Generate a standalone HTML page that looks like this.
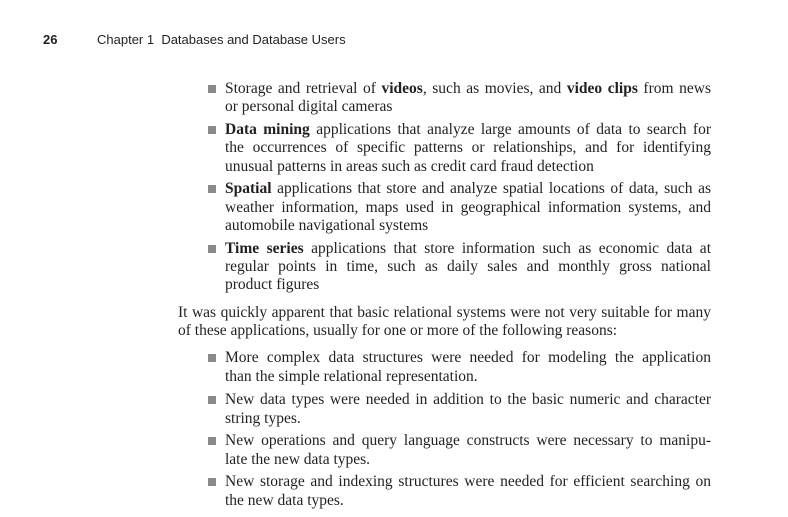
<!DOCTYPE html>
<html><head><meta charset="utf-8"><style>
body{margin:0;width:788px;height:517px;background:#fff;position:relative;overflow:hidden;color:#231f20}
.h{position:absolute;top:32px;font-family:"Liberation Sans",sans-serif;font-size:13px}
.l{position:absolute;font-family:"Liberation Serif",serif;font-size:15.5px;line-height:18px;white-space:nowrap}
.j{text-align:justify;text-align-last:justify;white-space:normal}
.b{position:absolute;width:8px;height:8px;background:#8a8a8a}
</style></head><body>
<div class="h" style="left:43px;font-weight:bold">26</div>
<div class="h" style="left:97px">Chapter 1&nbsp; Databases and Database Users</div>

<div class="b" style="left:208px;top:85px"></div>
<div class="l j" style="left:225px;top:80px;width:486px">Storage and retrieval of <b>videos</b>, such as movies, and <b>video clips</b> from news</div>
<div class="l" style="left:225px;top:98px">or personal digital cameras</div>

<div class="b" style="left:208px;top:126px"></div>
<div class="l j" style="left:225px;top:121px;width:486px"><b>Data mining</b> applications that analyze large amounts of data to search for</div>
<div class="l j" style="left:225px;top:139px;width:486px">the occurrences of specific patterns or relationships, and for identifying</div>
<div class="l" style="left:225px;top:158px">unusual patterns in areas such as credit card fraud detection</div>

<div class="b" style="left:208px;top:185px"></div>
<div class="l j" style="left:225px;top:180px;width:486px"><b>Spatial</b> applications that store and analyze spatial locations of data, such as</div>
<div class="l j" style="left:225px;top:199px;width:486px">weather information, maps used in geographical information systems, and</div>
<div class="l" style="left:225px;top:217px">automobile navigational systems</div>

<div class="b" style="left:208px;top:245px"></div>
<div class="l j" style="left:225px;top:240px;width:486px"><b>Time series</b> applications that store information such as economic data at</div>
<div class="l j" style="left:225px;top:258px;width:486px">regular points in time, such as daily sales and monthly gross national</div>
<div class="l" style="left:225px;top:276px">product figures</div>

<div class="l j" style="left:178px;top:304px;width:533px">It was quickly apparent that basic relational systems were not very suitable for many</div>
<div class="l" style="left:178px;top:322px">of these applications, usually for one or more of the following reasons:</div>

<div class="b" style="left:208px;top:354px"></div>
<div class="l j" style="left:225px;top:349px;width:486px">More complex data structures were needed for modeling the application</div>
<div class="l" style="left:225px;top:368px">than the simple relational representation.</div>

<div class="b" style="left:208px;top:396px"></div>
<div class="l j" style="left:225px;top:391px;width:486px">New data types were needed in addition to the basic numeric and character</div>
<div class="l" style="left:225px;top:410px">string types.</div>

<div class="b" style="left:208px;top:437px"></div>
<div class="l j" style="left:225px;top:432px;width:486px">New operations and query language constructs were necessary to manipu-</div>
<div class="l" style="left:225px;top:451px">late the new data types.</div>

<div class="b" style="left:208px;top:478px"></div>
<div class="l j" style="left:225px;top:473px;width:486px">New storage and indexing structures were needed for efficient searching on</div>
<div class="l" style="left:225px;top:492px">the new data types.</div>
</body></html>
